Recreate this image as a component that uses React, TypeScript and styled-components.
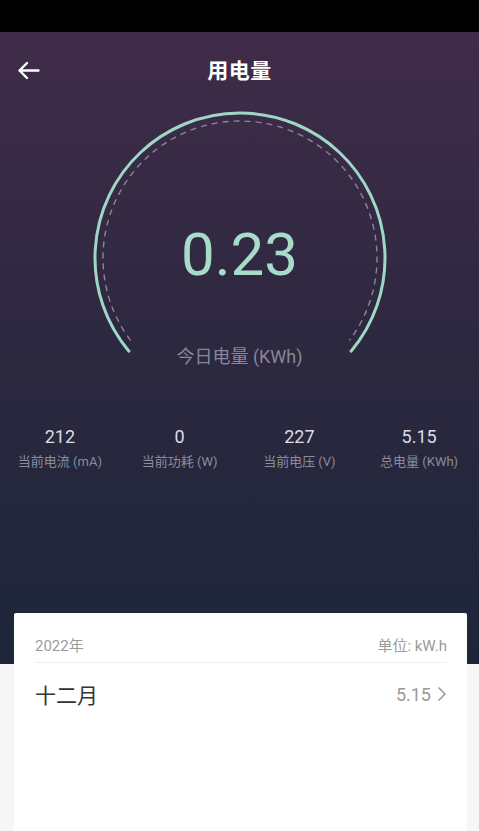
import React from "react";
import styled, { createGlobalStyle } from "styled-components";

const GlobalStyle = createGlobalStyle`
  html, body {
    margin: 0;
    padding: 0;
    background-color: #f6f6f8;
    overflow: hidden;
  }
  body {
    font-family: Roboto, "Noto Sans CJK SC", "Noto Sans", sans-serif;
  }
  * {
    box-sizing: border-box;
  }
`;

const Page = styled.div`
  width: 479px;
  min-height: 831px;
  display: flex;
  flex-direction: column;
`;

const StatusBar = styled.div`
  height: 32px;
  background-color: #000;
`;

const Hero = styled.div`
  height: 632px;
  background: linear-gradient(180deg, #402c49 0%, #2c283f 50%, #1d2639 100%);
  display: flex;
  flex-direction: column;
`;

const NavBar = styled.div`
  height: 76px;
  display: grid;
  grid-template-columns: 60px 1fr 60px;
  align-items: center;
`;

const BackButton = styled.button`
  background: none;
  border: none;
  padding: 0 0 0 17px;
  display: flex;
  align-items: center;
  cursor: pointer;
`;

const Title = styled.h1`
  margin: 0 0 2px;
  text-align: center;
  color: #ffffff;
  font-size: 21px;
  font-weight: 700;
  letter-spacing: 0.5px;
`;

const Gauge = styled.div`
  width: 300px;
  height: 262px;
  margin: 2px auto 0;
  display: grid;
`;

const GaugeSvg = styled.svg`
  grid-area: 1 / 1;
`;

const GaugeContent = styled.div`
  grid-area: 1 / 1;
  display: flex;
  flex-direction: column;
  align-items: center;
  padding-top: 115px;
`;

const Reading = styled.div`
  font-family: Roboto, sans-serif;
  font-size: 60px;
  line-height: 60px;
  color: #a7dccb;
`;

const ReadingLabel = styled.div`
  margin-top: 62px;
  font-size: 18px;
  line-height: 20px;
  color: #8a8697;
`;

const StatsRow = styled.div`
  margin-top: 54px;
  display: grid;
  grid-template-columns: repeat(4, 1fr);
`;

const Stat = styled.div`
  display: flex;
  flex-direction: column;
  align-items: center;
`;

const StatValue = styled.div`
  font-size: 18px;
  line-height: 22px;
  color: #dcdde6;
`;

const StatLabel = styled.div`
  margin-top: 5px;
  font-size: 13px;
  line-height: 18px;
  color: #8a8c9e;
`;

const Card = styled.div`
  margin: -51px 12px 0 14px;
  min-height: 230px;
  background-color: #ffffff;
  border-radius: 2px;
  padding: 0 20px 0 21px;
`;

const CardHeader = styled.div`
  height: 50px;
  display: flex;
  align-items: center;
  justify-content: space-between;
  border-bottom: 1px solid #efefef;
  font-size: 15px;
  color: #9a9a9a;
  padding-top: 14px;
`;

const MonthRow = styled.div`
  height: 64px;
  display: flex;
  align-items: center;
  justify-content: space-between;
  padding-bottom: 2px;
`;

const MonthName = styled.span`
  font-size: 21px;
  color: #333333;
`;

const MonthValue = styled.span`
  display: flex;
  align-items: center;
  gap: 6px;
  font-size: 18px;
  color: #9a9a9a;
`;

interface IStat {
  value: string;
  label: string;
}

const stats: Array<IStat> = [
  { value: "212", label: "当前电流 (mA)" },
  { value: "0", label: "当前功耗 (W)" },
  { value: "227", label: "当前电压 (V)" },
  { value: "5.15", label: "总电量 (KWh)" },
];

// point on a circle, angle measured clockwise from the top
const polar = (cx: number, cy: number, r: number, deg: number) => {
  const rad = (deg * Math.PI) / 180;
  return [cx + r * Math.sin(rad), cy - r * Math.cos(rad)];
};

const arcPath = (r: number, from: number, to: number) => {
  const [x1, y1] = polar(150, 148, r, from);
  const [x2, y2] = polar(150, 148, r, to);
  return `M ${x1} ${y1} A ${r} ${r} 0 1 1 ${x2} ${y2}`;
};

const App: React.FC = () => {
  return (
    <Page>
      <GlobalStyle />
      <StatusBar />
      <Hero>
        <NavBar>
          <BackButton>
            <svg width="23" height="19" viewBox="0 0 23 19" fill="none">
              <path
                d="M21.5 9.5H2.5M10 2L2.5 9.5L10 17"
                stroke="#fff"
                strokeWidth="2.4"
                strokeLinecap="round"
                strokeLinejoin="round"
              />
            </svg>
          </BackButton>
          <Title>用电量</Title>
          <div />
        </NavBar>

        <Gauge>
          <GaugeSvg width="300" height="262" viewBox="0 0 300 262" fill="none">
            <path
              d={arcPath(145, 230, 130)}
              stroke="#9fd7c7"
              strokeWidth="3"
              strokeLinecap="round"
            />
            <path
              d={arcPath(137, 233, 127)}
              stroke="#8d8699"
              strokeWidth="1.4"
              strokeDasharray="6 5"
            />
          </GaugeSvg>
          <GaugeContent>
            <Reading>0.23</Reading>
            <ReadingLabel>今日电量 (KWh)</ReadingLabel>
          </GaugeContent>
        </Gauge>

        <StatsRow>
          {stats.map((stat, index) => (
            <Stat key={index}>
              <StatValue>{stat.value}</StatValue>
              <StatLabel>{stat.label}</StatLabel>
            </Stat>
          ))}
        </StatsRow>
      </Hero>

      <Card>
        <CardHeader>
          <span>2022年</span>
          <span>单位: kW.h</span>
        </CardHeader>
        <MonthRow>
          <MonthName>十二月</MonthName>
          <MonthValue>
            5.15
            <svg width="10" height="16" viewBox="0 0 10 16" fill="none">
              <path
                d="M1.5 1.5L8 8L1.5 14.5"
                stroke="#9a9a9a"
                strokeWidth="1.6"
              />
            </svg>
          </MonthValue>
        </MonthRow>
      </Card>
    </Page>
  );
};

export default App;
